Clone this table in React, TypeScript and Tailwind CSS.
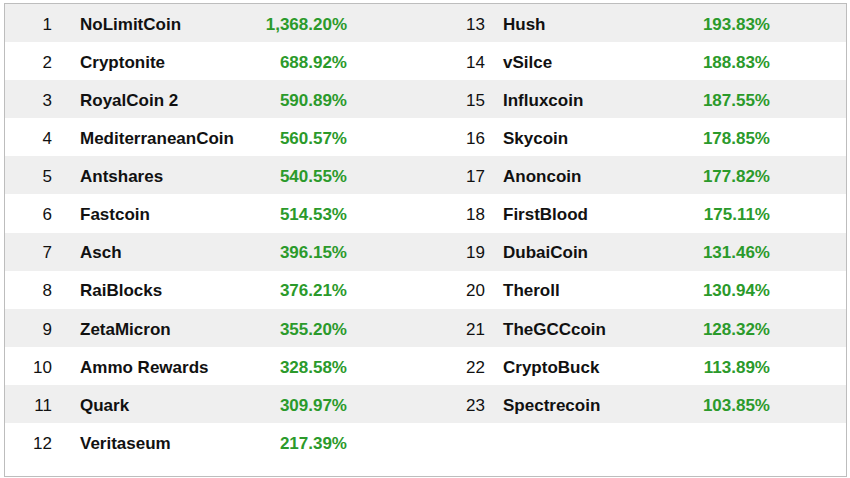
const left = [
  ["1", "NoLimitCoin", "1,368.20%"],
  ["2", "Cryptonite", "688.92%"],
  ["3", "RoyalCoin 2", "590.89%"],
  ["4", "MediterraneanCoin", "560.57%"],
  ["5", "Antshares", "540.55%"],
  ["6", "Fastcoin", "514.53%"],
  ["7", "Asch", "396.15%"],
  ["8", "RaiBlocks", "376.21%"],
  ["9", "ZetaMicron", "355.20%"],
  ["10", "Ammo Rewards", "328.58%"],
  ["11", "Quark", "309.97%"],
  ["12", "Veritaseum", "217.39%"],
];

const right = [
  ["13", "Hush", "193.83%"],
  ["14", "vSilce", "188.83%"],
  ["15", "Influxcoin", "187.55%"],
  ["16", "Skycoin", "178.85%"],
  ["17", "Anoncoin", "177.82%"],
  ["18", "FirstBlood", "175.11%"],
  ["19", "DubaiCoin", "131.46%"],
  ["20", "Theroll", "130.94%"],
  ["21", "TheGCCcoin", "128.32%"],
  ["22", "CryptoBuck", "113.89%"],
  ["23", "Spectrecoin", "103.85%"],
];

function Cell({ item, side }: { item?: string[]; side: "l" | "r" }) {
  if (!item) return <div className="flex-1" />;
  const [rank, name, pct] = item;
  return side === "l" ? (
    <div className="flex flex-1 items-center">
      <span className="w-[47px] text-right">{rank}</span>
      <span className="ml-[28px] w-[150px] font-bold">{name}</span>
      <span className="w-[117px] text-right font-bold text-[#2b9a2b]">{pct}</span>
    </div>
  ) : (
    <div className="flex flex-1 items-center">
      <span className="w-[57px] text-right">{rank}</span>
      <span className="ml-[18px] w-[150px] font-bold">{name}</span>
      <span className="w-[117px] text-right font-bold text-[#2b9a2b]">{pct}</span>
    </div>
  );
}

export default function App() {
  return (
    <div className="h-[478px] w-[850px] bg-white pl-[4px] pt-[3px] font-['Liberation_Sans',Arial,sans-serif] text-[17px] text-[#111]">
      <div className="h-[474px] w-[843px] border border-[#bdbdbd]">
        {left.map((l, i) => (
          <div
            key={i}
            className={`flex h-[38.1px] items-center pt-[3px] ${i % 2 === 0 ? "bg-[#efefef]" : "bg-white"}`}
          >
            <div className="flex w-[423px]">
              <Cell item={l} side="l" />
            </div>
            <div className="flex flex-1">
              <Cell item={right[i]} side="r" />
            </div>
          </div>
        ))}
      </div>
    </div>
  );
}
